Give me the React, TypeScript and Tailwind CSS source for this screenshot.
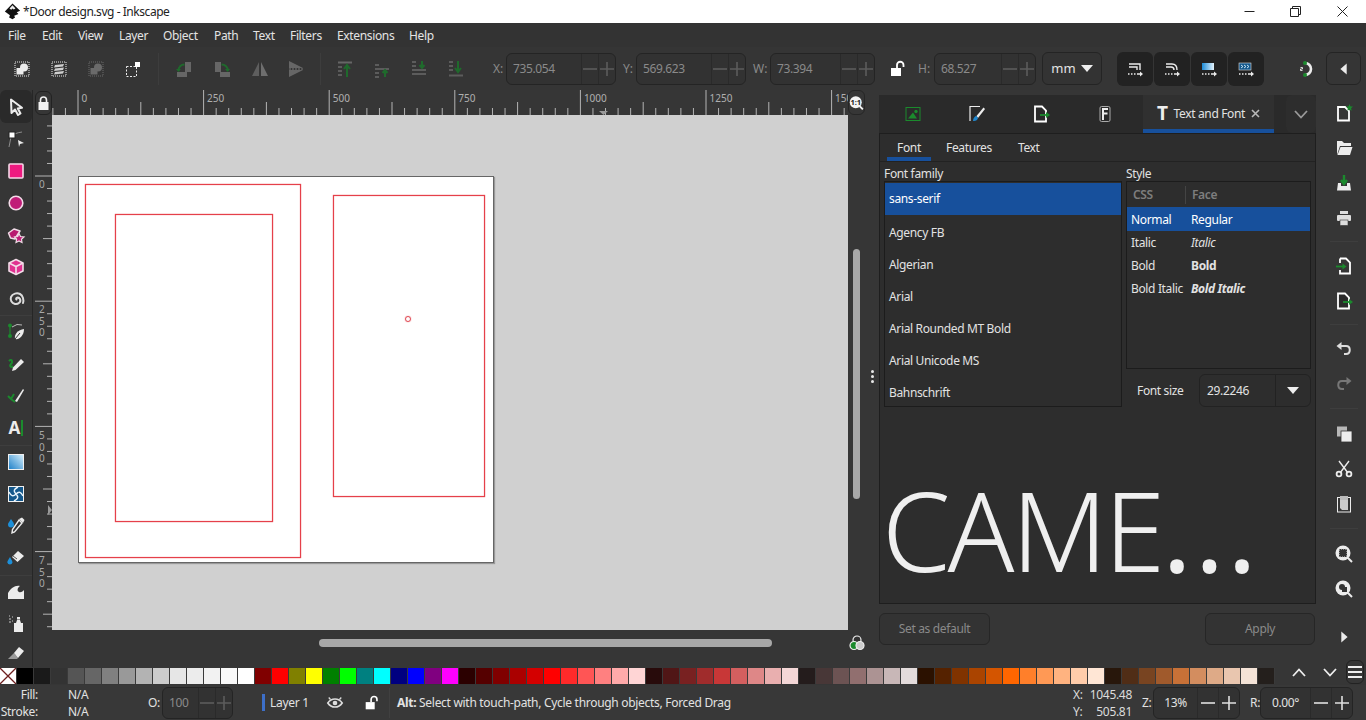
import { ReactNode } from "react";

const W = "#ececec";
const G = "#1b8a2d";
const DIM = "#8c8c8c";

const Svg = ({ children, size = 20 }: { children: ReactNode; size?: number }) => (
  <svg width={size} height={size} viewBox="0 0 20 20" fill="none" className="shrink-0">
    {children}
  </svg>
);

const icons: Record<string, ReactNode> = {
  select: <path d="M5 2.5 L5.5 16 L9 12.5 L12 18 L14.5 16.5 L11.8 11.5 L16 10.8 Z" fill="#333" stroke={W} strokeWidth="2" strokeLinejoin="round" />,
  node: (
    <>
      <path d="M3 18 L5 8 Q8 4 16 3" stroke={DIM} strokeWidth="1" />
      <rect x="3" y="3" width="6" height="6" fill="#fff" stroke="#222" strokeWidth="1" />
      <path d="M12 11 L18 14 L14 15 L13 18 Z" fill={W} />
    </>
  ),
  rect: <rect x="3" y="3" width="14" height="14" rx="1" fill="#ee1a80" stroke="#f6d9e8" strokeWidth="1.6" />,
  ellipse: <circle cx="10" cy="10" r="6.8" fill="#c01d78" stroke="#f3dbe8" strokeWidth="1.6" />,
  star: (
    <>
      <path d="M2.5 8 L8 4 L14 6 L12 9 L9 14 L4.5 13 Z" fill="#b81a70" stroke="#f0dbe6" strokeWidth="1.5" strokeLinejoin="round" />
      <path d="M13 8.5 L14.5 11.5 L18 12 L15.5 14.3 L16 17.5 L13 16 L10 17.5 L10.6 14.3 L8.5 12 L11.7 11.5 Z" fill="#c01d78" stroke="#f0dbe6" strokeWidth="1.2" />
    </>
  ),
  box: (
    <>
      <path d="M10 2.5 L17 6 L17 14 L10 17.5 L3 14 L3 6 Z" fill="#e03090" stroke="#f3dbe8" strokeWidth="1.6" strokeLinejoin="round" />
      <path d="M3 6 L10 9.5 L17 6 M10 9.5 L10 17.5" stroke="#f3dbe8" strokeWidth="1.6" />
    </>
  ),
  spiral: <path d="M10.5 10.5 C9 9 12.5 7.5 14 10 C15.5 13 12 15.5 9 15 C5.5 14 4 11 5 8 C6.5 4.5 11 3.5 14 5 C17 6.5 18 11 17 14" stroke="#dcdcdc" strokeWidth="2" strokeLinecap="round" />,
  pen: (
    <>
      <path d="M4 4 L4 15" stroke={G} strokeWidth="1.2" />
      <circle cx="4" cy="3.5" r="2" fill={G} />
      <circle cx="4" cy="14" r="2" fill={G} />
      <path d="M6 5 Q11 1 16 3" stroke="#bbb" strokeWidth="1" />
      <path d="M9 17 C8 12 12 8 18 7 C18 13 14 18 9 17 Z" fill={W} />
      <path d="M9 17 L14 11" stroke="#333" strokeWidth="1" />
    </>
  ),
  pencil: (
    <>
      <path d="M3 7 C6 4 7 8 5 10 C3 12 5 14 7 12" stroke={G} strokeWidth="2" />
      <path d="M6 17 L7 13.5 L15 5 L18 8 L9.5 16 Z" fill={W} />
    </>
  ),
  calli: (
    <>
      <path d="M2 10 L5 13 L8 8 M5 13 L9 16" stroke={G} strokeWidth="2" />
      <path d="M9 15 L17 3 L18 4 L11 16 Z" fill={W} />
    </>
  ),
  gradient: (
    <>
      <defs>
        <linearGradient id="gr" x1="1" y1="0" x2="0" y2="1">
          <stop offset="0" stopColor="#d8f0fc" />
          <stop offset="1" stopColor="#1c7fc8" />
        </linearGradient>
      </defs>
      <rect x="2.5" y="2.5" width="15" height="15" fill="url(#gr)" stroke="#f0f0f0" strokeWidth="1" />
    </>
  ),
  mesh: (
    <>
      <rect x="2.5" y="2.5" width="15" height="15" fill="#14588c" stroke="#f0f0f0" strokeWidth="1" />
      <path d="M10 10 C7 7 8 5 12 3 M10 10 C13 7 15 8 17 12 M10 10 C13 13 12 15 8 17 M10 10 C7 13 5 12 3 8" stroke="#e8f4fc" strokeWidth="1.5" />
    </>
  ),
  dropper: (
    <>
      <path d="M5 3 C7 6 8 7 8 8.5 A3 3 0 0 1 2 8.5 C2 7 3.5 5.5 5 3 Z" fill="#1d8fd8" />
      <path d="M13 4 L16 7 L8.5 16 L6 17 L6.5 13.5 Z" fill="#333" stroke={W} strokeWidth="1.4" />
      <path d="M13 3 L16 1.5 L18.5 4 L17 7 Z" fill={W} />
    </>
  ),
  bucket: (
    <>
      <path d="M4 9 C5.5 12 6.5 13 6.5 14.5 A2.7 2.7 0 0 1 1.3 14.5 C1.3 13 2.5 11.5 4 9 Z" fill="#1d8fd8" />
      <path d="M6 9 L12 3 L18 8 L11.5 14 Z" fill={W} />
      <path d="M7 8 L11 11" stroke="#555" strokeWidth="1" />
    </>
  ),
  tweak: <path d="M2 17 L2 11 C5 6 9 3 14 4 C11 6 11 9 13 10 C15 11 17 9 18 8 L18 17 Z" fill={W} />,
  spray: (
    <>
      <rect x="8" y="9" width="9" height="9" fill={W} />
      <path d="M10 9 L11 6 L14 6 L15 9 Z" fill={W} />
      <rect x="11" y="3" width="3" height="2.5" fill={W} />
      <path d="M3 5 h2 M6 3 h1 M6 7 h1 M3 8 h2 M3 2 h1" stroke="#999" strokeWidth="1.4" />
    </>
  ),
  eraser: (
    <>
      <path d="M2 16 L8 10 L12 15 L11 16 Z" fill="#999" />
      <path d="M8 10 L13 4 L18 8 L12 15 Z" fill={W} />
    </>
  ),
  selectAll: (
    <>
      <rect x="3" y="3" width="14" height="14" stroke={W} strokeDasharray="1 1" />
      <rect x="4.5" y="9" width="7" height="6.5" fill={W} />
      <circle cx="12" cy="8.5" r="4" fill={W} />
    </>
  ),
  selectLayers: (
    <>
      <rect x="3" y="3" width="14" height="14" stroke={W} strokeDasharray="1 1" />
      <path d="M6 6 L15 5 L14 7.5 L5 8.5 Z M6 9.5 L15 8.5 L14 11 L5 12 Z M6 13 L15 12 L14 14.5 L5 15.5 Z" fill="#cfcfcf" />
    </>
  ),
  deselect: (
    <>
      <rect x="3" y="3" width="14" height="14" stroke="#6a6a6a" strokeDasharray="1 1" />
      <rect x="4.5" y="9" width="7" height="6.5" fill="#6a6a6a" />
      <circle cx="12" cy="8.5" r="4" fill="#6a6a6a" />
    </>
  ),
  touch: (
    <>
      <rect x="3.5" y="7.5" width="10" height="10" stroke={W} strokeDasharray="2 1.5" />
      <rect x="12" y="3" width="5" height="5" fill="#fff" />
    </>
  ),
  rotL: (
    <>
      <rect x="11" y="3" width="6" height="10" fill="#666" />
      <rect x="3" y="13" width="10" height="5" fill="#666" />
      <path d="M4.5 12 C4.5 8 7 5.5 10.5 5.5" stroke="#1f6a2c" strokeWidth="2" />
      <path d="M2 10 L7 10 L4.5 13 Z" fill="#1f6a2c" />
    </>
  ),
  rotR: (
    <>
      <rect x="3" y="3" width="6" height="10" fill="#666" />
      <rect x="8" y="13" width="10" height="5" fill="#666" />
      <path d="M16 12 C16 8 13 5.5 9.5 5.5" stroke="#1f6a2c" strokeWidth="2" />
      <path d="M13 10 L18 10 L15.5 13 Z" fill="#1f6a2c" />
    </>
  ),
  flipH: (
    <>
      <path d="M9 3 L9 17 L2 17 Z" fill="#5e5e5e" />
      <path d="M11 3 L11 17 L18 17 Z" fill="#6e6e6e" />
    </>
  ),
  flipV: (
    <>
      <path d="M3 2 L17 9 L3 9 Z" fill="#666" />
      <path d="M3 11 L17 11 L3 18 Z" fill="#666" />
      <path d="M3 10 H18" stroke="#888" strokeDasharray="2 1" strokeWidth="0.8" />
    </>
  ),
  raiseTop: (
    <>
      <path d="M3 3.5 H17" stroke="#666" strokeWidth="2" />
      <path d="M3 8 H7 M3 12 H7 M3 16 H7" stroke="#5c5c5c" strokeWidth="2" />
      <path d="M12 18 V7 M9 10 L12 6 L15 10" stroke="#1f6a2c" strokeWidth="2" />
    </>
  ),
  raise: (
    <>
      <path d="M3 6 H7 M3 14 H7 M3 18 H7 M3 10 H17" stroke="#5c5c5c" strokeWidth="2" />
      <path d="M13 18 V12 M10.5 14 L13 11 L15.5 14" stroke="#1f6a2c" strokeWidth="2" />
    </>
  ),
  lower: (
    <>
      <path d="M3 3 H7 M3 7 H7 M3 15 H17 M3 11 H17" stroke="#5c5c5c" strokeWidth="2" />
      <path d="M13 2 V8 M10.5 6 L13 9 L15.5 6" stroke="#1f6a2c" strokeWidth="2" />
    </>
  ),
  lowerBottom: (
    <>
      <path d="M3 3 H7 M3 7 H7 M3 11 H7 M3 16.5 H17" stroke="#5c5c5c" strokeWidth="2" />
      <path d="M12 2 V12 M9 9 L12 13 L15 9" stroke="#1f6a2c" strokeWidth="2" />
    </>
  ),
  lockOpen: (
    <>
      <rect x="3" y="9" width="10" height="8" fill="#fff" />
      <path d="M9 9 V6 A3.2 3.2 0 0 1 15.5 6 V8" stroke="#fff" strokeWidth="1.8" />
    </>
  ),
  snap1: (
    <>
      <path d="M4 5 H15 V11 M4 8 H12 V11" stroke={W} strokeWidth="1.4" />
      <path d="M3 15 h1.5 M6 15 h1.5 M9 15 h1.5 M12 15 h3" stroke={W} strokeWidth="1.6" />
      <path d="M15 12.5 L18 15 L15 17.5 Z" fill={W} />
    </>
  ),
  snap2: (
    <>
      <path d="M4 5 H10 Q15 5 15 11 M4 8 H9 Q12 8 12 11" stroke={W} strokeWidth="1.4" />
      <path d="M3 15 h1.5 M6 15 h1.5 M9 15 h1.5 M12 15 h3" stroke={W} strokeWidth="1.6" />
      <path d="M15 12.5 L18 15 L15 17.5 Z" fill={W} />
    </>
  ),
  snap3: (
    <>
      <defs>
        <linearGradient id="sn" x1="0" y1="0" x2="1" y2="0">
          <stop offset="0" stopColor="#1c8cd8" />
          <stop offset="1" stopColor="#e4f3fc" />
        </linearGradient>
      </defs>
      <rect x="3" y="4" width="12" height="7" fill="url(#sn)" />
      <path d="M3 15 h1.5 M6 15 h1.5 M9 15 h1.5 M12 15 h3" stroke={W} strokeWidth="1.6" />
      <path d="M15 12.5 L18 15 L15 17.5 Z" fill={W} />
    </>
  ),
  snap4: (
    <>
      <rect x="3" y="4" width="12" height="7" fill="#14588c" stroke="#ddd" strokeWidth="0.6" />
      <path d="M5 6 L7 7.5 L5 9 M8 6 L10 7.5 L8 9 M11 6 L13 7.5 L11 9" stroke="#d8eefc" strokeWidth="0.9" />
      <path d="M3 15 h1.5 M6 15 h1.5 M9 15 h1.5 M12 15 h3" stroke={W} strokeWidth="1.6" />
      <path d="M15 12.5 L18 15 L15 17.5 Z" fill={W} />
    </>
  ),
  magnet: (
    <>
      <path d="M9 4 A6 6 0 1 1 9 16" stroke={W} strokeWidth="2.6" />
      <circle cx="9" cy="4" r="2" fill={G} />
      <circle cx="9" cy="16" r="2" fill={G} />
      <path d="M4.5 8.5 h2 v1.5 h-2 v1.5 h2" stroke={W} strokeWidth="0.9" />
    </>
  ),
  objImage: (
    <>
      <rect x="3" y="3.5" width="14" height="13" stroke={G} strokeWidth="1" />
      <path d="M5 14.5 L10 8.5 L14 14.5 Z" fill={G} />
      <circle cx="13" cy="7.5" r="1.7" fill={G} />
    </>
  ),
  brush: (
    <>
      <path d="M13 2.5 H3 V17" stroke={W} strokeWidth="1.2" />
      <path d="M9.5 12 L16.5 3.5 L18 5 L11 14 Z" fill={W} />
      <path d="M6 17 C6 14 8 12 9.5 12 L11 14 C10.5 16 8.5 17.5 6 17 Z" fill="#1f87cf" />
    </>
  ),
  docExport: (
    <>
      <path d="M4 2.5 H11 L15 6.5 V17.5 H4 Z" stroke="#fff" strokeWidth="1.8" fill="#2a2a2a" />
      <path d="M9 11 H17" stroke={G} strokeWidth="1.8" />
      <path d="M15 8 L19 11 L15 14 Z" fill={G} />
    </>
  ),
  fontDock: (
    <>
      <rect x="5" y="2.5" width="10" height="15" rx="1.5" stroke="#aaa" strokeWidth="1" />
      <path d="M8 16 V5 H13 M8 9.5 H12.5" stroke="#eee" strokeWidth="2" />
    </>
  ),
  docNew: (
    <>
      <path d="M4 4 H11 L15 8 V17.5 H4 Z" stroke="#fff" strokeWidth="1.8" />
      <path d="M15.5 1 L16.5 3.4 L19 3.6 L17.1 5.2 L17.7 7.8 L15.5 6.4 L13.3 7.8 L13.9 5.2 L12 3.6 L14.5 3.4 Z" fill={G} />
    </>
  ),
  folder: (
    <>
      <path d="M3 3 H8 L10 5 H17 V8 H6 L3 17 Z" fill={W} />
      <path d="M6.5 9 H18.5 L16 17 H3.5 Z" fill={W} />
    </>
  ),
  save: (
    <>
      <path d="M4 10 H7 V13 H13 V10 H16 L17 17.5 H3 Z" fill={W} />
      <path d="M10 2 V9 M7 7 L10 11 L13 7" stroke={G} strokeWidth="2.4" />
    </>
  ),
  print: (
    <>
      <rect x="6" y="3" width="8" height="3" fill="#ddd" />
      <rect x="3" y="7" width="14" height="6" rx="1" fill="#ddd" />
      <rect x="6" y="12" width="8" height="5.5" fill="#ddd" stroke="#333" strokeWidth="0.6" />
    </>
  ),
  importDoc: (
    <>
      <path d="M6 2.5 H12 L16 6.5 V17.5 H6 V14 M6 7 V2.5" stroke="#fff" strokeWidth="1.8" />
      <path d="M2 10.5 H10" stroke={G} strokeWidth="1.8" />
      <path d="M8.5 7.5 L12.5 10.5 L8.5 13.5 Z" fill={G} />
    </>
  ),
  undo: (
    <>
      <path d="M5 7 H12 C17 7 17 15 12 15 H10" stroke="#ddd" strokeWidth="2" />
      <path d="M7.5 3 L2.5 7 L7.5 11 Z" fill="#ddd" />
    </>
  ),
  redo: (
    <>
      <path d="M15 7 H8 C3 7 3 15 8 15 H10" stroke="#777" strokeWidth="2" />
      <path d="M12.5 3 L17.5 7 L12.5 11 Z" fill="#777" />
    </>
  ),
  copy: (
    <>
      <rect x="3" y="2.5" width="10" height="10" fill="#b8b8b8" />
      <rect x="7" y="7" width="11" height="11" fill={W} stroke="#333" strokeWidth="0.8" />
    </>
  ),
  cut: (
    <>
      <path d="M5 2 L14 14 M15 2 L6 14" stroke={W} strokeWidth="1.4" />
      <circle cx="5" cy="15" r="2.4" stroke={W} strokeWidth="1.8" />
      <circle cx="15" cy="15" r="2.4" stroke={W} strokeWidth="1.8" />
    </>
  ),
  paste: (
    <>
      <rect x="3.5" y="3.5" width="13" height="14.5" stroke={W} strokeWidth="1" />
      <rect x="6" y="2" width="8" height="4" fill="#bbb" />
      <path d="M6 6 H14 V16 H8 L6 14 Z" fill="#ccc" />
    </>
  ),
  zoomSel: (
    <>
      <circle cx="9" cy="9" r="7.5" fill={W} />
      <path d="M14 14 L18 18" stroke={W} strokeWidth="2" />
      <rect x="5" y="5" width="8" height="8" fill="#333" stroke="#ddd" strokeDasharray="1 1" />
    </>
  ),
  zoomDraw: (
    <>
      <circle cx="9" cy="9" r="7.5" fill={W} />
      <path d="M14 14 L18 18" stroke={W} strokeWidth="2" />
      <circle cx="8" cy="8" r="3" fill="#333" />
      <rect x="8" y="8" width="5" height="5" fill="#333" />
    </>
  ),
  triRight: <path d="M7 4 L14 10 L7 16 Z" fill={W} />,
  triLeft: <path d="M13 4 L6 10 L13 16 Z" fill={W} />,
  eye: (
    <>
      <path d="M2 10 C6 4 14 4 18 10 C14 16 6 16 2 10 Z" stroke="#ddd" strokeWidth="1.8" />
      <circle cx="10" cy="10" r="2.6" fill="#ddd" />
      <path d="M3 4 L5 6 M17 4 L15 6" stroke="#ddd" strokeWidth="1.5" />
    </>
  ),
};

const Icon = ({ name, size }: { name: string; size?: number }) => <Svg size={size}>{icons[name]}</Svg>;

const Spin = ({ value, w, cell = 17, dim = true }: { value: string; w: string; cell?: number; dim?: boolean }) => (
  <div className={`flex h-[32px] shrink-0 items-stretch rounded-md border border-[#242424] bg-[#323232] ${w}`}>
    <div className={`flex flex-1 items-center text-[12px] tracking-[-0.4px] ${dim ? "pl-[6px] text-[#8a8a8a]" : "justify-center text-[#e2e2e2]"}`}>{value}</div>
    <div className="flex items-center justify-center border-l border-[#2a2a2a]" style={{ width: cell }}>
      <svg width="14" height="14" viewBox="0 0 14 14">
        <path d="M0 7 H14" stroke={dim ? "#5c5c5c" : "#e0e0e0"} strokeWidth="1.6" />
      </svg>
    </div>
    <div className="flex items-center justify-center border-l border-[#2a2a2a]" style={{ width: cell }}>
      <svg width="14" height="14" viewBox="0 0 14 14">
        <path d="M0 7 H14 M7 0 V14" stroke={dim ? "#5c5c5c" : "#e0e0e0"} strokeWidth="1.6" />
      </svg>
    </div>
  </div>
);

const TitleBar = () => (
  <div className="flex h-[23px] items-center bg-white text-black">
    <div className="flex w-[23px] justify-center pl-[1px]">
      <svg width="17" height="17" viewBox="0 0 20 20">
        <path d="M10 0.5 L19 9 L15 11 L17 13 L12 15 L13 17 L10 19 L6 17 L7 14.5 L1 10 Z" fill="#111" />
        <path d="M10 2.5 L13.5 6.5 L11.5 7.5 L10 6.5 L8.5 8 L6.5 6.5 Z" fill="#eee" />
      </svg>
    </div>
    <span className="flex-1 text-[12px] tracking-[-0.45px] text-[#222]">*Door design.svg - Inkscape</span>
    <div className="flex h-full w-[46px] items-center justify-center">
      <svg width="11" height="11" viewBox="0 0 11 11"><path d="M0.5 5.5 H10.5" stroke="#222" /></svg>
    </div>
    <div className="flex h-full w-[46px] items-center justify-center">
      <svg width="11" height="11" viewBox="0 0 11 11"><path d="M0.5 2.5 H8.5 V10.5 H0.5 Z M2.5 2.5 V0.5 H10.5 V8.5 H8.5" fill="none" stroke="#222" /></svg>
    </div>
    <div className="flex h-full w-[48px] items-center justify-center">
      <svg width="11" height="11" viewBox="0 0 11 11"><path d="M0.5 0.5 L10.5 10.5 M10.5 0.5 L0.5 10.5" stroke="#222" /></svg>
    </div>
  </div>
);

const MENUS: [string, string][] = [
  ["File", "w-[34px]"],
  ["Edit", "w-[36px]"],
  ["View", "w-[41px]"],
  ["Layer", "w-[44px]"],
  ["Object", "w-[51px]"],
  ["Path", "w-[39px]"],
  ["Text", "w-[37px]"],
  ["Filters", "w-[47px]"],
  ["Extensions", "w-[72px]"],
  ["Help", "w-[40px]"],
];

const MenuBar = () => (
  <div className="flex h-[24px] items-center bg-[#333333] pl-[8px] pt-[2px] text-[12px] tracking-[-0.35px] text-[#e4e4e4]">
    {MENUS.map(([m, w]) => (
      <span key={m} className={w}>{m}</span>
    ))}
  </div>
);

const TBtn = ({ name, w = "w-[37px]" }: { name: string; w?: string }) => (
  <div className={`flex h-full shrink-0 items-center justify-center ${w}`}>
    <Icon name={name} />
  </div>
);

const Toolbar = () => (
  <div className="flex h-[43px] items-center bg-[#353535] text-[12px] text-[#8a8a8a]">
    <div className="h-[32px] w-[3px]" />
    <TBtn name="selectAll" />
    <TBtn name="selectLayers" />
    <TBtn name="deselect" />
    <TBtn name="touch" />
    <div className="ml-[7px] mr-[6px] h-[32px] w-px bg-[#3d3d3d]" />
    <TBtn name="rotL" w="w-[38px]" />
    <TBtn name="rotR" w="w-[38px]" />
    <TBtn name="flipH" w="w-[37px]" />
    <TBtn name="flipV" w="w-[36px]" />
    <div className="ml-[6px] mr-[5px] h-[32px] w-px bg-[#3d3d3d]" />
    <TBtn name="raiseTop" />
    <TBtn name="raise" />
    <TBtn name="lower" />
    <TBtn name="lowerBottom" />
    <span className="ml-[19px] w-[13px]">X:</span>
    <Spin value="735.054" w="w-[110px]" />
    <span className="ml-[7px] w-[13px]">Y:</span>
    <Spin value="569.623" w="w-[110px]" />
    <span className="ml-[7px] w-[17px]">W:</span>
    <Spin value="73.394" w="w-[105px]" />
    <div className="ml-[13px] mr-[10px] flex w-[20px] justify-center"><Icon name="lockOpen" /></div>
    <span className="w-[16px]">H:</span>
    <Spin value="68.527" w="w-[102px]" />
    <div className="ml-[6px] flex h-[33px] w-[60px] shrink-0 items-center justify-center gap-[5px] rounded-md border border-[#242424] bg-[#333333] text-[13px] text-[#e4e4e4]">
      mm
      <svg width="12" height="7" viewBox="0 0 12 7"><path d="M0 0 H12 L6 7 Z" fill="#eee" /></svg>
    </div>
    <div className="ml-[15px] flex h-[34px] w-[147px] shrink-0 gap-px">
      <div className="rounded-md bg-[#222222]"><TBtn name="snap1" w="w-[36px]" /></div>
      <div className="rounded-md bg-[#222222]"><TBtn name="snap2" w="w-[36px]" /></div>
      <div className="rounded-md bg-[#222222]"><TBtn name="snap3" w="w-[36px]" /></div>
      <div className="rounded-md bg-[#222222]"><TBtn name="snap4" w="w-[36px]" /></div>
    </div>
    <div className="ml-[31px] flex w-[22px] justify-center"><Icon name="magnet" /></div>
    <div className="ml-[9px] flex h-[33px] w-[35px] shrink-0 items-center justify-center rounded-md border border-[#242424]">
      <Icon name="triLeft" size={18} />
    </div>
  </div>
);

const LEFT_TOOLS = ["node", "rect", "ellipse", "star", "box", "spiral", "|", "pen", "pencil", "calli", "A", "||", "gradient", "mesh", "dropper", "bucket", "||", "tweak", "spray", "eraser"];

const LeftTools = () => (
  <div className="flex w-[33px] flex-col border-r border-[#262626] bg-[#363636]">
    <div className="flex h-[33px] items-center justify-center rounded-md bg-[#2a2a2a]">
      <Icon name="select" />
    </div>
    {LEFT_TOOLS.map((t, i) =>
      t === "|" ? (
        <div key={i} className="h-px bg-[#3e3e3e]" />
      ) : t === "||" ? (
        <div key={i} className="h-[2px] border-b border-[#3e3e3e]" />
      ) : t === "A" ? (
        <div key={i} className="flex h-[32px] items-center justify-center gap-[1px]">
          <span className="text-[17px] font-bold text-[#ececec]">A</span>
          <span className="h-[16px] w-[2px] bg-[#1b8a2d]" />
        </div>
      ) : (
        <div key={i} className={`flex items-center justify-center ${t === "eraser" ? "h-[26px]" : "h-[32px]"}`}>
          <Icon name={t} />
        </div>
      )
    )}
  </div>
);

const TICK = "#b4b4b4";
const STEP = 125.6 / 10;

const TopRuler = () => {
  const ticks = Array.from({ length: 66 }, (_, i) => i - 2);
  return (
    <svg width="796" height="25" viewBox="0 0 796 25" className="block">
      {ticks.map((i) => {
        const x = 26 + i * STEP;
        const top = i % 10 === 0 ? 0 : i % 5 === 0 ? 12 : 18;
        return <line key={i} x1={x} x2={x} y1={top} y2={25} stroke={TICK} strokeWidth="1" />;
      })}
      {["0", "250", "500", "750", "1000", "1250", "150"].map((t, i) => (
        <text key={t} x={29.5 + i * 125.6} y={12} fontSize="10" fill="#b0b0b0">{t}</text>
      ))}
      <path d="M547 21 H556 L551.5 25 Z" fill="#999" />
    </svg>
  );
};

const VRuler = () => {
  const ticks = Array.from({ length: 42 }, (_, i) => i - 4);
  const labels: [number, string][] = [[61, "0"], [186, "2"], [186, "5"], [186, "0"], [312, "5"], [312, "0"], [312, "0"], [437, "7"], [437, "5"], [437, "0"]];
  return (
    <svg width="19" height="515" viewBox="0 0 19 515" className="block">
      {ticks.map((i) => {
        const y = 61 + i * 12.52;
        const left = i % 10 === 0 ? 2 : i % 5 === 0 ? 10 : 14;
        return <line key={i} x1={left} x2={19} y1={y} y2={y} stroke={TICK} strokeWidth="1" />;
      })}
      {labels.map(([y, t], i) => {
        const prev = labels.slice(0, i).filter((l) => l[0] === y).length;
        return (
          <text key={i} x={6} y={y + 12 + prev * 11.5} fontSize="10" fill="#a8a8a8">{t}</text>
        );
      })}
      <path d="M15 390 L19 395 L15 400 Z" fill="#999" />
    </svg>
  );
};

const Canvas = () => (
  <div className="relative h-[515px] w-[796px] overflow-hidden bg-[#d0d0d0]">
    <div className="absolute left-[26px] top-[61px] h-[387px] w-[416px] border border-[#666] bg-white shadow-[1px_1px_1px_#999]" />
    <div className="absolute left-[33px] top-[69px] h-[374px] w-[216px] border border-[#e5404a] shadow-[0_0_1px_#e5404a,inset_0_0_1px_#e5404a]" />
    <div className="absolute left-[63px] top-[99px] h-[308px] w-[158px] border border-[#e5404a] shadow-[0_0_1px_#e5404a,inset_0_0_1px_#e5404a]" />
    <div className="absolute left-[281px] top-[80px] h-[302px] w-[152px] border border-[#e5404a] shadow-[0_0_1px_#e5404a,inset_0_0_1px_#e5404a]" />
    <div className="absolute left-[353px] top-[201px] h-[6px] w-[6px] rounded-full border border-[#e04650] shadow-[0_0_1px_#e04650]" />
  </div>
);

const CanvasArea = () => (
  <div className="flex w-[832px] flex-col">
    <div className="flex h-[25px]">
      <div className="flex w-[19px] items-center justify-center pl-[2px]">
        <div className="flex h-[24px] w-[17px] items-center justify-center rounded-md border border-[#222]">
          <svg width="11" height="14" viewBox="0 0 11 14">
            <rect x="0.5" y="6" width="10" height="8" fill="#f2f2f2" />
            <path d="M2.5 6 V4 A3 3 0 0 1 8.5 4 V6" fill="none" stroke="#f2f2f2" strokeWidth="1.6" />
          </svg>
        </div>
      </div>
      <TopRuler />
      <div className="flex w-[17px] items-center justify-center rounded-md border border-[#262626]">
        <svg width="16" height="16" viewBox="0 0 20 20">
          <circle cx="9" cy="9" r="8" fill="#f4f4f4" />
          <path d="M14 14 L18.5 18.5" stroke="#f4f4f4" strokeWidth="2.4" />
          <text x="9" y="12.5" textAnchor="middle" fontSize="10" fontWeight="700" fill="#222">1:1</text>
        </svg>
      </div>
    </div>
    <div className="flex h-[515px]">
      <VRuler />
      <Canvas />
      <div className="flex w-[17px] justify-center pt-[134px]">
        <div className="h-[250px] w-[7px] rounded-full bg-[#a8a8a8]" />
      </div>
    </div>
    <div className="flex h-[25px]">
      <div className="w-[19px]" />
      <div className="flex w-[796px] items-center pl-[267px]">
        <div className="h-[8px] w-[453px] rounded-full bg-[#a8a8a8]" />
      </div>
      <div className="flex w-[17px] items-center justify-center">
        <svg width="16" height="16" viewBox="0 0 16 16">
          <circle cx="8" cy="5" r="4" fill="#333" stroke="#eee" strokeWidth="1.2" />
          <circle cx="5" cy="10.5" r="4" fill="#1b8a2d" stroke="#eee" strokeWidth="1.2" />
          <circle cx="11" cy="10.5" r="4" fill="#ccc" stroke="#eee" strokeWidth="1.2" />
        </svg>
      </div>
    </div>
  </div>
);

const FONTS = ["Agency FB", "Algerian", "Arial", "Arial Rounded MT Bold", "Arial Unicode MS", "Bahnschrift"];

const FontPanel = () => (
  <div className="flex w-[437px] shrink-0 flex-col pt-[5px] text-[12px] tracking-[-0.35px] text-[#e2e2e2]">
    <div className="flex h-[38px] items-stretch bg-[#2a2a2a] pl-[2px]">
      {["objImage", "brush", "docExport", "fontDock"].map((n, i) => (
        <div key={n} className={`flex items-center justify-center ${i === 3 ? "w-[70px] pr-[6px]" : "w-[64px]"}`}>
          <Icon name={n} />
        </div>
      ))}
      <div className="flex w-[131px] items-center justify-center gap-[6px] border-b-4 border-[#17509c] bg-[#303030] pt-[3px]">
        <span className="font-['Liberation_Serif',serif] text-[19px] font-bold leading-none text-[#eeeeee]">T</span>
        <span>Text and Font</span>
        <svg width="9" height="9" viewBox="0 0 9 9"><path d="M1 1 L8 8 M8 1 L1 8" stroke="#b8b8b8" strokeWidth="1.6" /></svg>
      </div>
      <div className="ml-[12px] flex w-[30px] items-center justify-center rounded-md bg-[#2d2d2d]">
        <svg width="14" height="9" viewBox="0 0 14 9"><path d="M1 1 L7 7.5 L13 1" fill="none" stroke="#9a9a9a" strokeWidth="1.8" /></svg>
      </div>
    </div>
    <div className="flex h-[471px] flex-col border border-[#1e1e1e] bg-[#2d2d2d]">
      <div className="flex h-[28px] border-b border-[#222] pl-[7px]">
        <div className="flex w-[44px] items-center justify-center border-b-4 border-[#17509c] pt-[4px]">Font</div>
        <div className="ml-[15px] flex items-center">Features</div>
        <div className="ml-[26px] flex items-center">Text</div>
      </div>
      <div className="flex gap-[4px] px-[4px] pt-[5px]">
        <div className="w-[238px]">
          <div className="h-[14px] leading-[14px]">Font family</div>
          <div className="h-[226px] overflow-hidden border border-[#1c1c1c] pt-px">
            <div className="flex h-[32px] items-center bg-[#17509c] pl-[4px] text-white">sans-serif</div>
            <div className="h-[2px]" />
            {FONTS.map((f) => (
              <div key={f} className="flex h-[32px] items-center pl-[4px]">{f}</div>
            ))}
          </div>
        </div>
        <div className="w-[185px]">
          <div className="h-[14px] leading-[14px]">Style</div>
          <div className="h-[188px] border border-[#1c1c1c]">
            <div className="flex h-[25px] items-center font-semibold text-[#7e7e7e]">
              <div className="w-[59px] border-r border-[#444] pl-[6px]">CSS</div>
              <div className="pl-[6px]">Face</div>
            </div>
            <div className="flex h-[24px] items-center bg-[#17509c] pt-[2px] text-white">
              <div className="w-[64px] pl-[4px]">Normal</div>
              <div>Regular</div>
            </div>
            <div className="flex h-[23px] items-center">
              <div className="w-[64px] pl-[4px]">Italic</div>
              <div className="italic">Italic</div>
            </div>
            <div className="flex h-[23px] items-center">
              <div className="w-[64px] pl-[4px]">Bold</div>
              <div className="font-bold">Bold</div>
            </div>
            <div className="flex h-[23px] items-center">
              <div className="w-[64px] pl-[4px]">Bold Italic</div>
              <div className="font-bold italic">Bold Italic</div>
            </div>
          </div>
          <div className="mt-[5px] flex items-center pl-[11px]">
            <span className="w-[62px]">Font size</span>
            <div className="flex h-[33px] w-[112px] items-stretch rounded-md border border-[#222]">
              <div className="flex flex-1 items-center pl-[7px]">29.2246</div>
              <div className="flex w-[35px] items-center justify-center border-l border-[#222]">
                <svg width="12" height="7" viewBox="0 0 12 7"><path d="M0 0 H12 L6 7 Z" fill="#eee" /></svg>
              </div>
            </div>
          </div>
        </div>
      </div>
      <div className="flex flex-1 items-end whitespace-nowrap pb-[14px] pl-[2px] font-['Open_Sans',sans-serif] text-[110px] font-light leading-[120px] text-[#efefef]">
        <span className="tracking-[-3px]">CAME</span>
        <span className="font-normal tracking-[3px]">...</span>
      </div>
    </div>
    <div className="mt-[9px] flex justify-between pr-px">
      <div className="flex h-[32px] w-[111px] items-center justify-center rounded-md border border-[#262626] bg-[#333] text-[#8a8a8a]">Set as default</div>
      <div className="flex h-[32px] w-[110px] items-center justify-center rounded-md border border-[#262626] bg-[#333] text-[#8a8a8a]">Apply</div>
    </div>
  </div>
);

const RIGHT_TOOLS = ["docNew", "folder", "save", "print", "h-[13px]", "importDoc", "docExport", "h-[13px]", "undo", "redo", "h-[15px]", "copy", "cut", "paste", "h-[15px]", "zoomSel", "zoomDraw"];

const RightTools = () => (
  <div className="flex flex-1 flex-col pl-[6px] pt-[5px]">
    {RIGHT_TOOLS.map((t, i) =>
      t.startsWith("h-") ? (
        <div key={i} className={`flex items-center px-[8px] ${t}`}>
          <div className="h-px w-full bg-[#3e3e3e]" />
        </div>
      ) : (
        <div key={i} className="flex h-[35px] items-center justify-center">
          <Icon name={t} />
        </div>
      )
    )}
    <div className="mt-[13px] flex h-[35px] items-center justify-center">
      <Icon name="triRight" size={18} />
    </div>
  </div>
);

const SWATCHES = [
  "#000000", "#1a1a1a", "#333333", "#555555", "#666666", "#808080", "#999999", "#b3b3b3", "#cccccc", "#e6e6e6", "#ececec", "#f2f2f2", "#f9f9f9", "#ffffff",
  "#800000", "#ff0000", "#808000", "#ffff00", "#008000", "#00ff00", "#008080", "#00ffff", "#000080", "#0000ff", "#800080", "#ff00ff",
  "#2b0000", "#550000", "#800000", "#aa0000", "#d40000", "#ff0000", "#ff2a2a", "#ff5555", "#ff8080", "#ffaaaa", "#ffd5d5",
  "#280b0b", "#501616", "#782121", "#a02c2c", "#c83737", "#d35f5f", "#de8787", "#e9afaf", "#f4d7d7",
  "#241c1c", "#483737", "#6c5353", "#916f6f", "#ac9393", "#c8b7b7", "#e3dbdb",
  "#2b1100", "#552200", "#803300", "#aa4400", "#d45500", "#ff6600", "#ff7f2a", "#ff9955", "#ffb380", "#ffccaa", "#ffe6d5",
  "#28170b", "#502d16", "#784421", "#a05a2c", "#c87137", "#d38d5f", "#deaa87", "#e9c6af", "#f4e3d7", "#241f1c",
];

const Palette = () => (
  <div className="relative flex h-[18px] items-start bg-[#363636] pt-px">
    <div className="h-[16px] w-[17px] border-r border-[#333] bg-white">
      <svg width="16" height="16" viewBox="0 0 16 16"><path d="M0 0 L16 16 M16 0 L0 16" stroke="#6e1f1f" strokeWidth="1.3" /></svg>
    </div>
    {SWATCHES.map((c, i) => (
      <div key={i} className="h-[16px] w-[17px] border-r border-[#3a3a3a]" style={{ backgroundColor: c }} />
    ))}
    <div className="ml-[8px] flex w-[31px] justify-center">
      <svg width="14" height="9" viewBox="0 0 14 9"><path d="M1 8 L7 1.5 L13 8" fill="none" stroke="#eee" strokeWidth="1.8" /></svg>
    </div>
    <div className="flex w-[31px] justify-center">
      <svg width="14" height="9" viewBox="0 0 14 9"><path d="M1 1 L7 7.5 L13 1" fill="none" stroke="#eee" strokeWidth="1.8" /></svg>
    </div>
    <div className="absolute right-[2px] top-[-7px] flex h-[24px] w-[18px] items-center justify-center rounded-md border border-[#222]">
      <svg width="14" height="12" viewBox="0 0 14 12"><path d="M0 1 H14 M0 6 H14 M0 11 H14" stroke="#eee" strokeWidth="1.8" /></svg>
    </div>
  </div>
);

const StatusBar = () => (
  <div className="flex h-[35px] items-center bg-[#383838] text-[12px] tracking-[-0.3px] text-[#e2e2e2]">
    <div className="w-[38px] text-right leading-[17px]">
      <div>Fill:</div>
      <div>Stroke:</div>
    </div>
    <div className="ml-[30px] w-[80px] leading-[17px]">
      <div>N/A</div>
      <div>N/A</div>
    </div>
    <span className="w-[14px]">O:</span>
    <Spin value="100" w="w-[71px]" />
    <div className="ml-[29px] h-[17px] w-[3px] bg-[#3d6fc8]" />
    <span className="ml-[5px] w-[55px]">Layer 1</span>
    <div className="flex w-[20px] justify-center"><Icon name="eye" size={18} /></div>
    <div className="ml-[17px] flex w-[20px] justify-center"><Icon name="lockOpen" size={18} /></div>
    <div className="ml-[7px] h-[30px] w-px bg-[#404040]" />
    <span className="ml-[7px] w-[676px]"><b>Alt:</b> Select with touch-path, Cycle through objects, Forced Drag</span>
    <div className="w-[59px] leading-[17px] text-[#dcdcdc]">
      <div className="flex justify-between"><span>X:</span><span>1045.48</span></div>
      <div className="flex justify-between"><span>Y:</span><span>505.81</span></div>
    </div>
    <span className="ml-[10px] w-[11px]">Z:</span>
    <Spin value="13%" w="w-[87px]" cell={21} dim={false} />
    <span className="ml-[10px] w-[10px]">R:</span>
    <Spin value="0.00°" w="w-[93px]" cell={21} dim={false} />
  </div>
);

export default function App() {
  return (
    <div className="flex h-[720px] w-[1366px] flex-col overflow-hidden bg-[#363636] font-['Noto_Sans',sans-serif]">
      <TitleBar />
      <MenuBar />
      <Toolbar />
      <div className="flex h-[577px]">
        <LeftTools />
        <CanvasArea />
        <div className="flex w-[14px] flex-col items-center justify-center gap-[2px] pb-[5px]">
          <span className="h-[3px] w-[3px] rounded-full bg-[#e8e8e8]" />
          <span className="h-[3px] w-[3px] rounded-full bg-[#e8e8e8]" />
          <span className="h-[3px] w-[3px] rounded-full bg-[#e8e8e8]" />
        </div>
        <FontPanel />
        <RightTools />
      </div>
      <Palette />
      <StatusBar />
    </div>
  );
}
